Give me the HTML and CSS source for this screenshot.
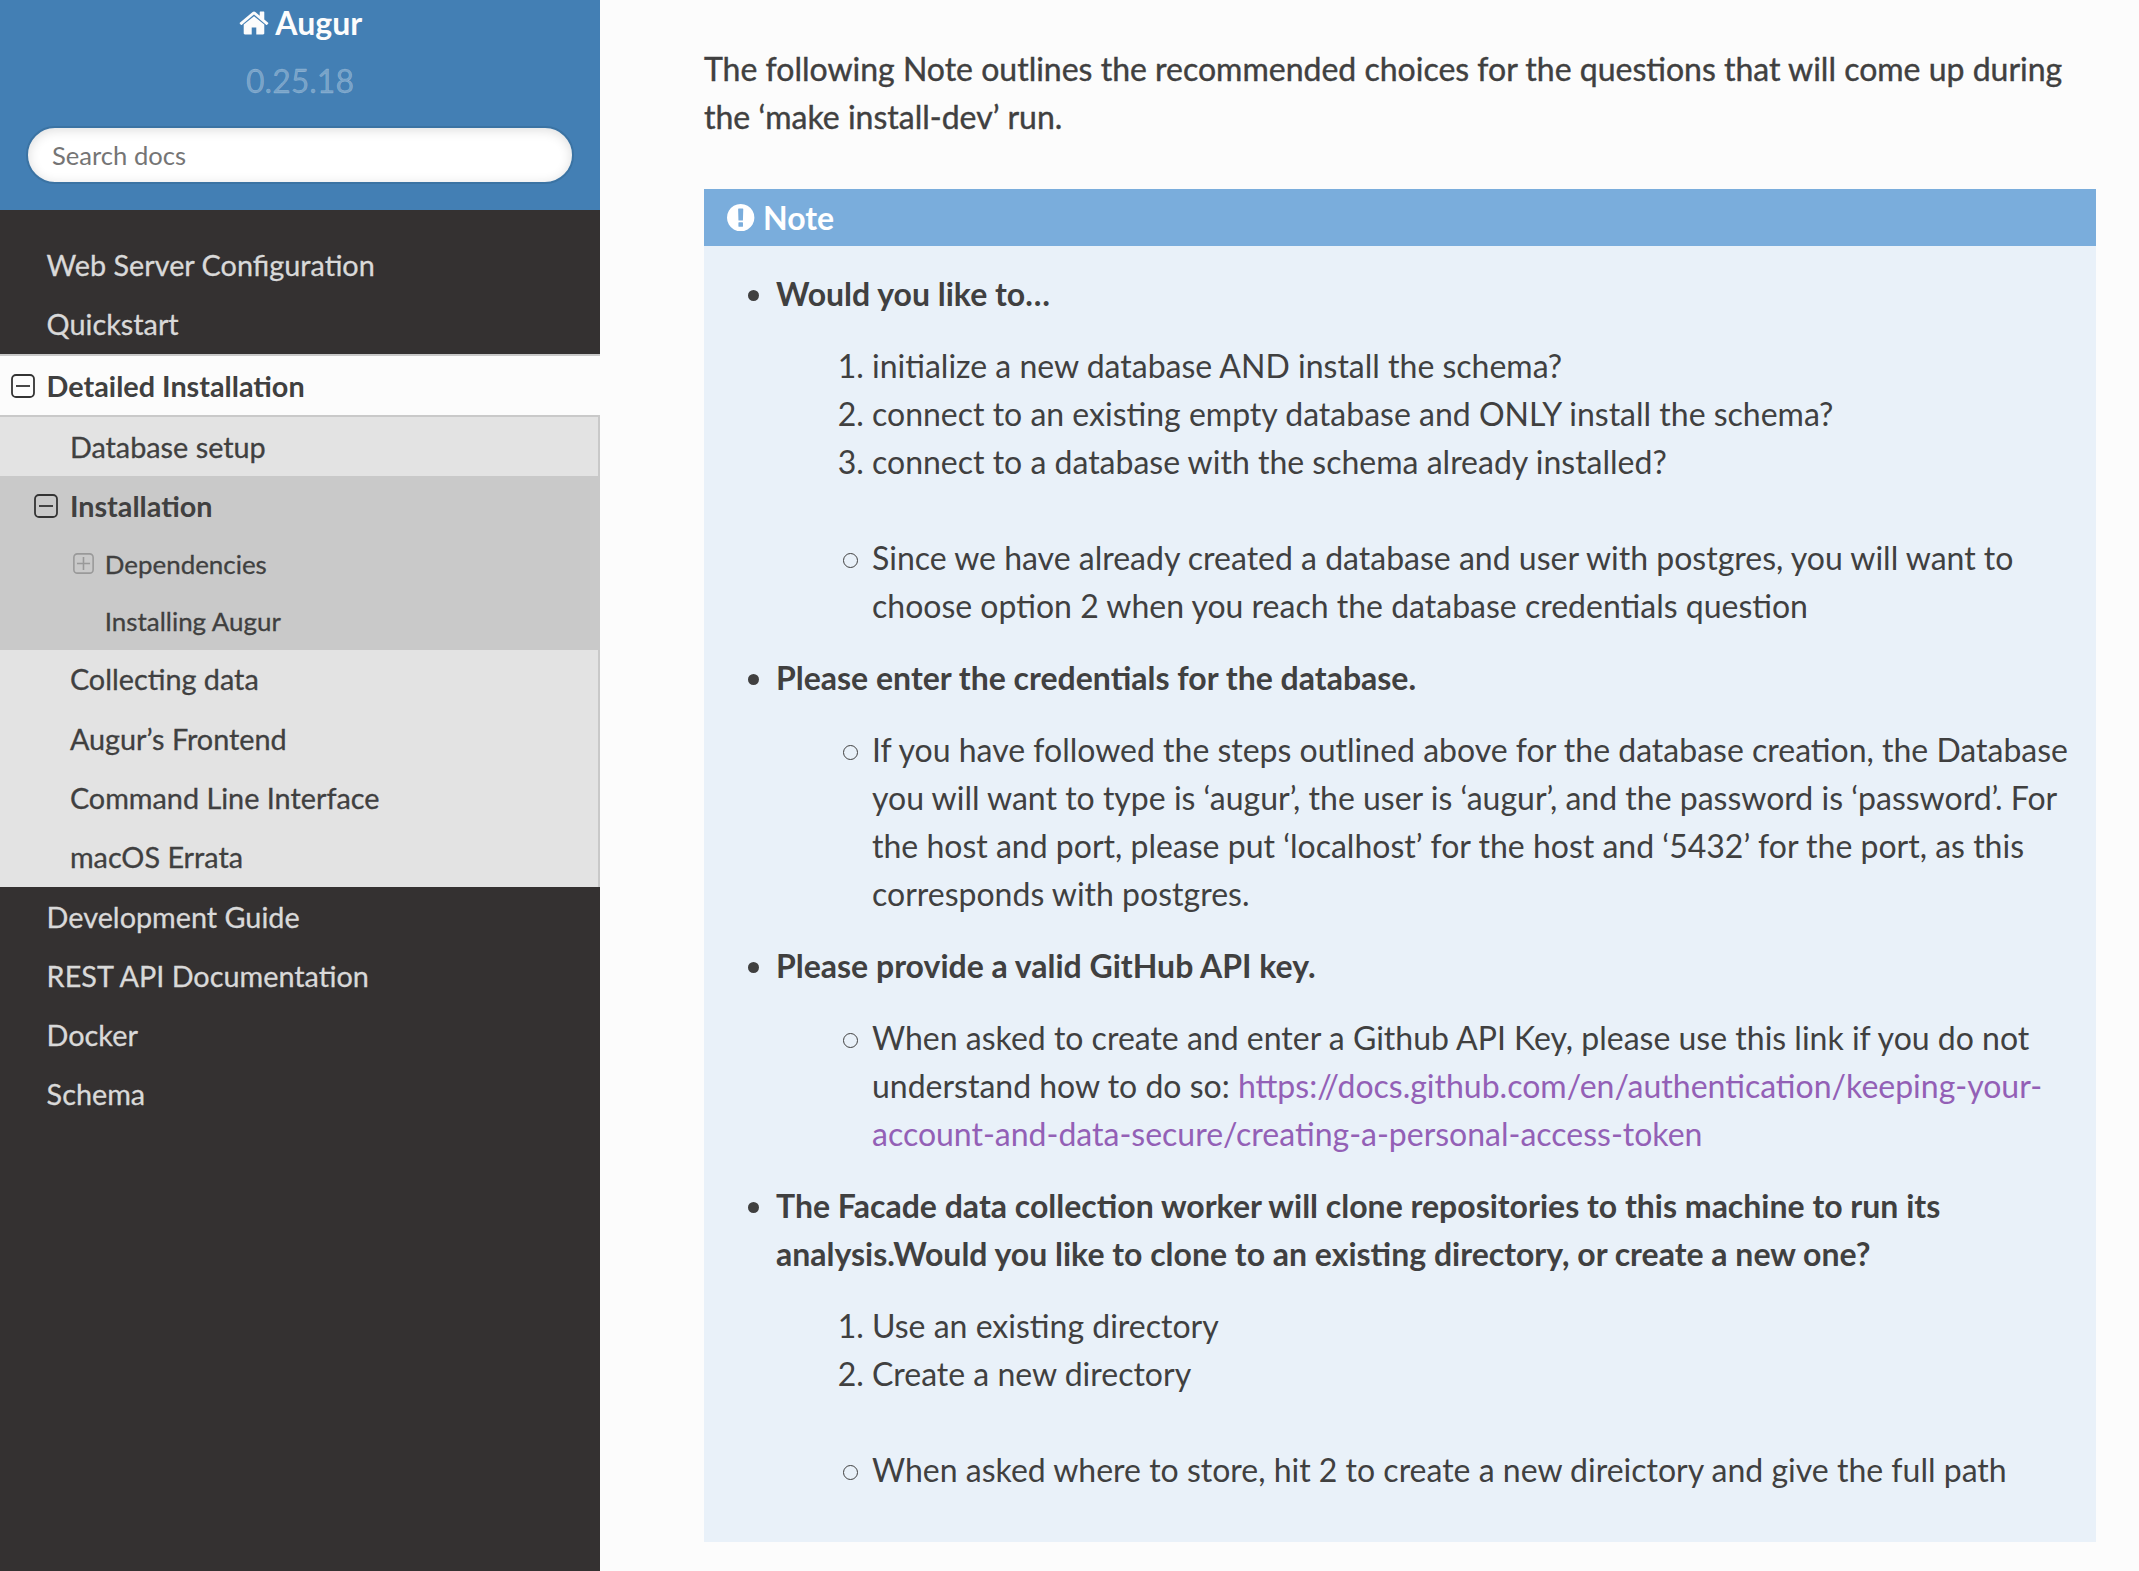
FILE: index.html
```html
<!DOCTYPE html>
<html lang="en">
<head>
<meta charset="utf-8">
<title>Installation — Augur documentation</title>
<link rel="stylesheet" href="styles.css">
</head>
<body>
<div class="page">
  <nav class="side">
    <div class="side-search">
      <a class="home"><svg class="icon-home" viewBox="0 0 1792 1792"><path d="M1472 992v480q0 26-19 45t-45 19h-384v-384h-256v384h-384q-26 0-45-19t-19-45v-480q0-1 .5-3t.5-3l575-474 575 474q1 2 1 6zm223-69l-62 74q-8 9-21 11h-3q-13 0-21-7l-692-577-692 577q-12 8-24 7-13-2-21-11l-62-74q-8-10-7-23.5t11-21.5l719-599q32-26 76-26t76 26l244 204v-195q0-14 9-23t23-9h192q14 0 23 9t9 23v408l219 182q10 8 11 21.5t-7 23.5z"/></svg><span>Augur</span></a>
      <div class="version">0.25.18</div>
      <input class="search" type="text" placeholder="Search docs">
    </div>
    <ul class="menu">
      <li><a class="l1">Web Server Configuration</a></li>
      <li><a class="l1">Quickstart</a></li>
      <li class="current"><a class="l1 open"><svg class="toggle" viewBox="0 0 24 24"><rect x="1" y="1" width="22" height="22" rx="4"/><path d="M5 12h14"/></svg>Detailed Installation</a>
        <ul class="sub">
          <li><a class="l2">Database setup</a></li>
          <li class="chosen"><a class="l2 open"><svg class="toggle" viewBox="0 0 24 24"><rect x="1" y="1" width="22" height="22" rx="4"/><path d="M5 12h14"/></svg>Installation</a>
            <ul>
              <li><a class="l3"><svg class="toggle faint" viewBox="0 0 24 24"><rect x="1" y="1" width="22" height="22" rx="4"/><path d="M4.500 12h15M12 4.500v15"/></svg>Dependencies</a></li>
              <li><a class="l3">Installing Augur</a></li>
            </ul>
          </li>
          <li><a class="l2">Collecting data</a></li>
          <li><a class="l2">Augur’s Frontend</a></li>
          <li><a class="l2">Command Line Interface</a></li>
          <li><a class="l2">macOS Errata</a></li>
        </ul>
      </li>
      <li><a class="l1">Development Guide</a></li>
      <li><a class="l1">REST API Documentation</a></li>
      <li><a class="l1">Docker</a></li>
      <li><a class="l1">Schema</a></li>
    </ul>
  </nav>
  <main class="content">
    <p class="intro">The following Note outlines the recommended choices for the questions that will come up during the ‘make install-dev’ run.</p>
    <section class="note">
      <h2 class="note-title"><svg class="icon-note" viewBox="128 128 1536 1536"><path d="M896 128q209 0 385.5 103t279.5 279.5 103 385.5-103 385.5-279.5 279.5-385.500 103-385.500-103-279.500-279.500-103-385.500 103-385.500 279.500-279.500 385.500-103zm128 1247v-190q0-14-9-23.500t-22-9.500h-192q-13 0-23 10t-10 23v188q0 13 10 23t23 10h192q13 0 22-9.500t9-23.500zm-2-344l18-621q0-12-10-18-10-8-24-8h-220q-14 0-24 8-10 6-10 18l17 621q0 10 10 17.500t24 7.500h185q14 0 23.500-7.500t10.500-17.500z"/></svg><span>Note</span></h2>
      <ul class="topics">
        <li>
          <p><strong>Would you like to…</strong></p>
          <ol>
            <li>initialize a new database AND install the schema?</li>
            <li>connect to an existing empty database and ONLY install the schema?</li>
            <li>connect to a database with the schema already installed?</li>
          </ol>
          <ul class="answer"><li>Since we have already created a database and user with postgres, you will want to choose option 2 when you reach the database credentials question</li></ul>
        </li>
        <li>
          <p><strong>Please enter the credentials for the database.</strong></p>
          <ul class="answer"><li>If you have followed the steps outlined above for the database creation, the Database you will want to type is ‘augur’, the user is ‘augur’, and the password is ‘password’. For the host and port, please put ‘localhost’ for the host and ‘5432’ for the port, as this corresponds with postgres.</li></ul>
        </li>
        <li>
          <p><strong>Please provide a valid GitHub API key.</strong></p>
          <ul class="answer"><li>When asked to create and enter a Github API Key, please use this link if you do not understand how to do so: <a class="link">https://docs.github.com/en/authentication/keeping-your-account-and-data-secure/creating-a-personal-access-token</a></li></ul>
        </li>
        <li>
          <p><strong>The Facade data collection worker will clone repositories to this machine to run its analysis.Would you like to clone to an existing directory, or create a new one?</strong></p>
          <ol>
            <li>Use an existing directory</li>
            <li>Create a new directory</li>
          </ol>
          <ul class="answer"><li>When asked where to store, hit 2 to create a new direictory and give the full path</li></ul>
        </li>
      </ul>
    </section>
  </main>
</div>
</body>
</html>
```
FILE: styles.css
```css
* { box-sizing: border-box; }
body {
  margin: 0;
  font: 32px/48px Lato, "Noto Sans", sans-serif;
  color: #404040;
  background: #fcfcfc;
}
ul, ol, p, h2 { margin: 0; padding: 0; }
ul { list-style: none; }

.page { display: flex; height: 1571px; overflow: hidden; }

/* Sidebar */
.side { width: 600px; flex: none; background: #343131; }
.side-search {
  height: 210px;
  padding: 0 26px;
  background: #437fb4;
  display: flex;
  flex-direction: column;
  align-items: center;
  color: #fcfcfc;
}
.home {
  display: flex;
  align-items: center;
  height: 46px;
  font-weight: 700;
}
.icon-home { width: 32px; height: 32px; fill: currentColor; margin-right: 5.500px; }
.version { margin-top: 11px; color: rgba(255, 255, 255, .3); -webkit-text-stroke: .3px; }
.search {
  width: 548px;
  height: 58px;
  margin-top: auto;
  margin-bottom: 26px;
  padding: 0 24px;
  border: 2px solid #3b73a3;
  border-radius: 50px;
  background: #fff;
  box-shadow: inset 0 2px 12px #ddd;
  font: 25.6px Lato, sans-serif;
}
.search::placeholder { color: #757575; opacity: 1; }

.menu { padding-top: 25.3px; font-size: 28.8px; line-height: 36px; -webkit-text-stroke: .3px; }
.menu a { display: flex; align-items: center; color: #d9d9d9; }
.menu .l1 { height: 59.3px; padding-left: 46.6px; }
.menu .current > .l1 {
  height: 63.3px;
  border-top: 2px solid #c9c9c9;
  border-bottom: 2px solid #c9c9c9;
  background: #fcfcfc;
}
.sub { background: #e3e3e3; border-right: 2px solid #c9c9c9; }
.sub a, .menu .open { color: #404040; }
.menu .open { font-weight: 700; -webkit-text-stroke: 0; }
.menu .l2 { height: 59.3px; padding-left: 69.9px; }
.menu .l3 { height: 56.97px; padding-left: 104.8px; padding-bottom: 1px; font-size: 25.92px; }
.chosen { background: #c9c9c9; }
.toggle {
  width: 24px;
  height: 24px;
  margin: 0 11.500px 0 -35.500px;
  fill: none;
  stroke: #333;
  stroke-width: 1.8;
}
.toggle.faint {
  width: 21px;
  height: 21px;
  margin: 0 10.500px 0 -31.500px;
  stroke: #999;
}

/* Article */
.content { width: 1600px; flex: none; padding: 45.3px 104px 0; }
.intro { width: 1392px; margin-bottom: 48px; -webkit-text-stroke: .4px; }
.note { width: 1392px; padding: 0 24px 48px; background: #e9f1f9; }
.note-title {
  display: flex;
  align-items: center;
  height: 56.700px;
  margin: 0 -24px 24px;
  padding-left: 23.4px;
  background: #7aaddc;
  color: #fff;
  font-size: 32px;
  font-weight: 700;
}
.icon-note { width: 27.4px; height: 27.4px; fill: currentColor; margin-right: 8.200px; }
.topics > li { padding-left: 48px; }
.topics > li + li { margin-top: 24px; }
.topics p { margin-bottom: 24px; }
.topics > li::before {
  content: "";
  float: left;
  width: 11.500px;
  height: 11.500px;
  margin: 20px 0 0 -28.200px;
  border-radius: 50%;
  background: #404040;
}
.topics ol { margin: 0 0 48px 96px; }
.answer { margin-left: 96px; }
.answer li::before {
  content: "";
  float: left;
  width: 13px;
  height: 13px;
  margin: 19px 0 0 -29px;
  border: 1.300px solid #404040;
  border-radius: 50%;
}
.link { color: #9360b6; }
```
